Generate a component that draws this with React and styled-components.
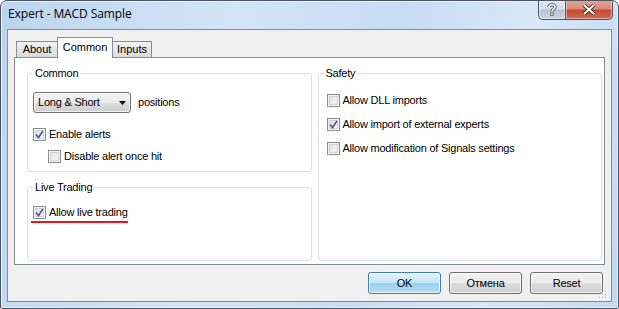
import React from "react";
import styled, { createGlobalStyle } from "styled-components";

const Global = createGlobalStyle`
  html, body { margin: 0; padding: 0; background: #ffffff; }
  body { font-family: "Liberation Sans", Arial, sans-serif; font-size: 11px; letter-spacing: -0.22px; color: #000; }
  * { box-sizing: border-box; }
`;

const Window = styled.div`
  width: 619px;
  height: 309px;
  display: flex;
  flex-direction: column;
  border: 1px solid #4b5462;
  border-radius: 7px 7px 2px 2px;
  background: linear-gradient(100deg, #bcd5ef 0%, #d3e5f7 35%, #c6dcf3 60%, #d9e8f8 80%, #c3d9f1 100%);
  overflow: hidden;
  box-shadow: inset 0 0 0 1px #e6f0fb;
`;

const TitleBar = styled.div`
  height: 28px;
  flex: 0 0 28px;
  display: flex;
  align-items: flex-start;
  padding-left: 7px;
`;

const Title = styled.div`
  font-family: "Open Sans", "Noto Sans", sans-serif;
  font-size: 12px;
  line-height: 16px;
  margin-top: 5px;
  color: #000;
  flex: 1;
  letter-spacing: -0.1px;
`;

const CaptionButtons = styled.div`
  display: flex;
  margin-right: 5px;
  margin-top: -1px;
`;

const CaptionButton = styled.div`
  height: 20px;
  width: ${(p) => p.$w}px;
  display: flex;
  align-items: center;
  justify-content: center;
  border: 1px solid #4a5666;
  border-top: none;
  ${(p) =>
    p.$close
      ? `
    background: linear-gradient(#e6a696 0%, #d98a77 45%, #c44a33 55%, #cf6b4f 100%);
    border-radius: 0 0 5px 0;
  `
      : `
    background: linear-gradient(#e3ebf4 0%, #d2dde9 45%, #b6c5d6 55%, #c7d4e2 100%);
    border-radius: 0 0 0 5px;
    border-right: none;
  `}
  box-shadow: inset 0 0 0 1px rgba(255,255,255,0.45);
`;

const Client = styled.div`
  flex: 1;
  margin: 0 6px 6px 6px;
  border: 1px solid #838c96;
  background: #f0f0f0;
  display: flex;
  flex-direction: column;
  padding: 7px 6px 0 6px;
  position: relative;
`;

const TabStrip = styled.div`
  height: 20px;
  display: flex;
  align-items: flex-end;
  padding-left: 2px;
  position: relative;
  z-index: 2;
`;

const Tab = styled.div`
  height: ${(p) => (p.$active ? 21 : 16)}px;
  width: ${(p) => p.$w}px;
  margin-bottom: ${(p) => (p.$active ? -1 : 0)}px;
  border: 1px solid #898c95;
  border-bottom: none;
  ${(p) => p.$noLeft && "border-left: none;"}
  ${(p) => p.$noRight && "border-right: none;"}
  background: ${(p) =>
    p.$active ? "#ffffff" : "linear-gradient(#f3f3f3, #e5e5e5 50%, #dcdcdc)"};
  display: flex;
  justify-content: center;
  padding-top: ${(p) => (p.$active ? 3 : 1)}px;
  line-height: 13px;
  letter-spacing: 0;
`;

const Panel = styled.div`
  height: 208px;
  flex: 0 0 208px;
  border: 1px solid #898c95;
  background: #ffffff;
  padding: 15px 2px 3px 12px;
  display: grid;
  grid-template-columns: 1fr 1fr;
  column-gap: 6px;
`;

const Column = styled.div`
  display: flex;
  flex-direction: column;
  gap: 15px;
`;

const Group = styled.div`
  position: relative;
  border: 1px solid #d5dfe5;
  border-radius: 3px;
  padding: ${(p) => p.$pad};
  flex: ${(p) => (p.$grow ? 1 : "0 0 auto")};
  display: flex;
  flex-direction: column;
  align-items: flex-start;
`;

const GroupTitle = styled.span`
  position: absolute;
  top: -8px;
  left: 5px;
  padding: 0 2px;
  background: #ffffff;
  line-height: 14px;
`;

const Row = styled.div`
  display: flex;
  align-items: center;
  gap: ${(p) => p.$gap || 3}px;
  margin-top: ${(p) => p.$mt || 0}px;
  margin-left: ${(p) => p.$ml || 0}px;
  line-height: 13px;
  height: ${(p) => p.$h || 13}px;
`;

const Box = styled.span`
  width: 13px;
  height: 13px;
  flex: 0 0 13px;
  border: 1px solid #8e8f8f;
  background: linear-gradient(135deg, #d6d6d6 0%, #eeeeee 55%, #fbfbfb 100%);
  box-shadow: inset 0 0 0 1px #f4f4f4, inset 0 0 0 2px #d4d4d4;
  display: flex;
  align-items: center;
  justify-content: center;
`;

const Combo = styled.div`
  width: 98px;
  height: 21px;
  border: 1px solid #707070;
  border-radius: 3px;
  background: linear-gradient(#f2f2f2 0%, #ebebeb 50%, #dddddd 51%, #cfcfcf 100%);
  box-shadow: inset 0 0 0 1px rgba(255, 255, 255, 0.7);
  display: flex;
  align-items: center;
  justify-content: space-between;
  padding: 0 4px 0 4px;
`;

const Underline = styled.div`
  width: 97px;
  height: 2px;
  background: #f0141e;
  margin: 2px 0 0 -2px;
`;

const Footer = styled.div`
  display: flex;
  justify-content: flex-end;
  gap: 8px;
  padding: 7px 2px 0 0;
`;

const Button = styled.div`
  width: 73px;
  height: 22px;
  border-radius: 3px;
  display: flex;
  align-items: center;
  justify-content: center;
  border: 1px solid ${(p) => (p.$default ? "#3c7fb1" : "#707070")};
  background: ${(p) =>
    p.$default
      ? "linear-gradient(#e5f4fc 0%, #c4e5f6 50%, #98d1ef 51%, #b6def4 100%)"
      : "linear-gradient(#f2f2f2 0%, #ebebeb 50%, #dddddd 51%, #cfcfcf 100%)"};
  box-shadow: inset 0 0 0 1px rgba(255, 255, 255, 0.75);
`;

const Grip = styled.svg`
  position: absolute;
  right: 4px;
  bottom: 2px;
`;

const Check = () => (
  <svg width="9" height="9" viewBox="0 0 9 9">
    <path d="M1 4.5 L3.5 7.5 L8 1" fill="none" stroke="#4b5e94" strokeWidth="1.7" />
  </svg>
);

const CheckRow = ({ checked, children, ...rest }) => (
  <Row {...rest}>
    <Box>{checked && <Check />}</Box>
    <span>{children}</span>
  </Row>
);

export default function App() {
  return (
    <>
      <Global />
      <Window>
        <TitleBar>
          <Title>Expert - MACD Sample</Title>
          <CaptionButtons>
            <CaptionButton $w={27}>
              <svg width="10" height="13" viewBox="0 0 10 13">
                <path
                  d="M2 4 C2 1 8 1 8 4 C8 6 5 6 5 8.5"
                  fill="none"
                  stroke="#3d4a5a"
                  strokeWidth="3.2"
                />
                <path
                  d="M2 4 C2 1 8 1 8 4 C8 6 5 6 5 8.5"
                  fill="none"
                  stroke="#ffffff"
                  strokeWidth="1.6"
                />
                <rect x="3.4" y="9.6" width="3.2" height="3" fill="#3d4a5a" />
                <rect x="4.2" y="10.3" width="1.6" height="1.6" fill="#ffffff" />
              </svg>
            </CaptionButton>
            <CaptionButton $w={48} $close>
              <svg width="14" height="11" viewBox="0 0 14 11">
                <path d="M2 1 L12 10 M12 1 L2 10" stroke="#4a2a24" strokeWidth="3.8" />
                <path d="M2 1 L12 10 M12 1 L2 10" stroke="#ffffff" strokeWidth="2" />
              </svg>
            </CaptionButton>
          </CaptionButtons>
        </TitleBar>
        <Client>
          <TabStrip>
            <Tab $w={41} $noRight>About</Tab>
            <Tab $w={56} $active>Common</Tab>
            <Tab $w={39} $noLeft>Inputs</Tab>
          </TabStrip>
          <Panel>
            <Column>
              <Group $pad="18px 5px 8px 5px">
                <GroupTitle>Common</GroupTitle>
                <Row $gap={7} $h={21}>
                  <Combo>
                    <span>Long &amp; Short</span>
                    <svg width="7" height="4" viewBox="0 0 7 4">
                      <path d="M0 0 H7 L3.5 4 Z" fill="#000" />
                    </svg>
                  </Combo>
                  <span>positions</span>
                </Row>
                <CheckRow checked $mt={15}>Enable alerts</CheckRow>
                <CheckRow $mt={9} $ml={15}>Disable alert once hit</CheckRow>
              </Group>
              <Group $grow $pad="18px 5px 8px 5px">
                <GroupTitle>Live Trading</GroupTitle>
                <CheckRow checked>Allow live trading</CheckRow>
                <Underline />
              </Group>
            </Column>
            <Group $pad="20px 8px 8px 8px">
              <GroupTitle>Safety</GroupTitle>
              <CheckRow>Allow DLL imports</CheckRow>
              <CheckRow checked $mt={11}>Allow import of external experts</CheckRow>
              <CheckRow $mt={11}>Allow modification of Signals settings</CheckRow>
            </Group>
          </Panel>
          <Footer>
            <Button $default>OK</Button>
            <Button>Отмена</Button>
            <Button>Reset</Button>
          </Footer>
          <Grip width="9" height="9" viewBox="0 0 9 9">
            {[
              [7, 1],
              [7, 4],
              [4, 4],
              [7, 7],
              [4, 7],
              [1, 7],
            ].map(([x, y]) => (
              <rect key={`${x}-${y}`} x={x} y={y} width="1" height="1" fill="#b8bcc2" />
            ))}
          </Grip>
        </Client>
      </Window>
    </>
  );
}
